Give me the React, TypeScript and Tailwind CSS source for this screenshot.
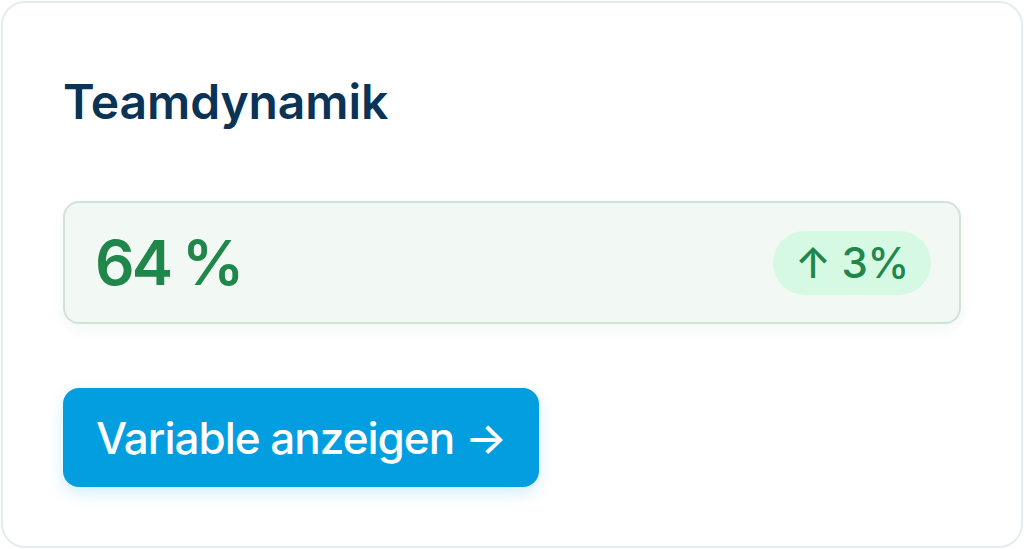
import React from "react";

export default function App() {
  return (
    <div className="w-[1024px] h-[549px] bg-white p-[1px] font-['Inter','Liberation_Sans',sans-serif]">
      <div className="h-full rounded-[24px] border-2 border-[#e6ebf0] bg-white px-[60px] pt-[70px]">
        {/* Title */}
        <h2 className="text-[48px] leading-[58px] font-semibold tracking-[-0.1px] text-[#0a3356]">
          Teamdynamik
        </h2>

        {/* Metric row */}
        <div className="mt-[70px] flex h-[123px] items-center justify-between rounded-[16px] border-2 border-[#cfe4d7] bg-[#f2f8f4] pl-[30px] pr-[28px] shadow-[0_6px_14px_rgba(34,139,80,0.06)]">
          <span className="flex items-baseline gap-[12px] text-[62px] leading-none font-semibold text-[#20874b]">
            <span className="tracking-[-3px]">64</span>
            <span className="tracking-[-2px]">%</span>
          </span>
          <span className="flex h-[64px] items-center rounded-full bg-[#d6f9e3] px-[22px] text-[42px] leading-none font-medium tracking-[-0.3px] text-[#20874b]">
            ↑ 3%
          </span>
        </div>

        {/* Action */}
        <button className="mt-[64px] flex h-[99px] items-center rounded-[16px] bg-[#039ee0] px-[33px] text-[44px] font-medium tracking-[-1px] text-white shadow-[0_6px_16px_rgba(3,158,224,0.18)]">
          Variable anzeigen →
        </button>
      </div>
    </div>
  );
}
